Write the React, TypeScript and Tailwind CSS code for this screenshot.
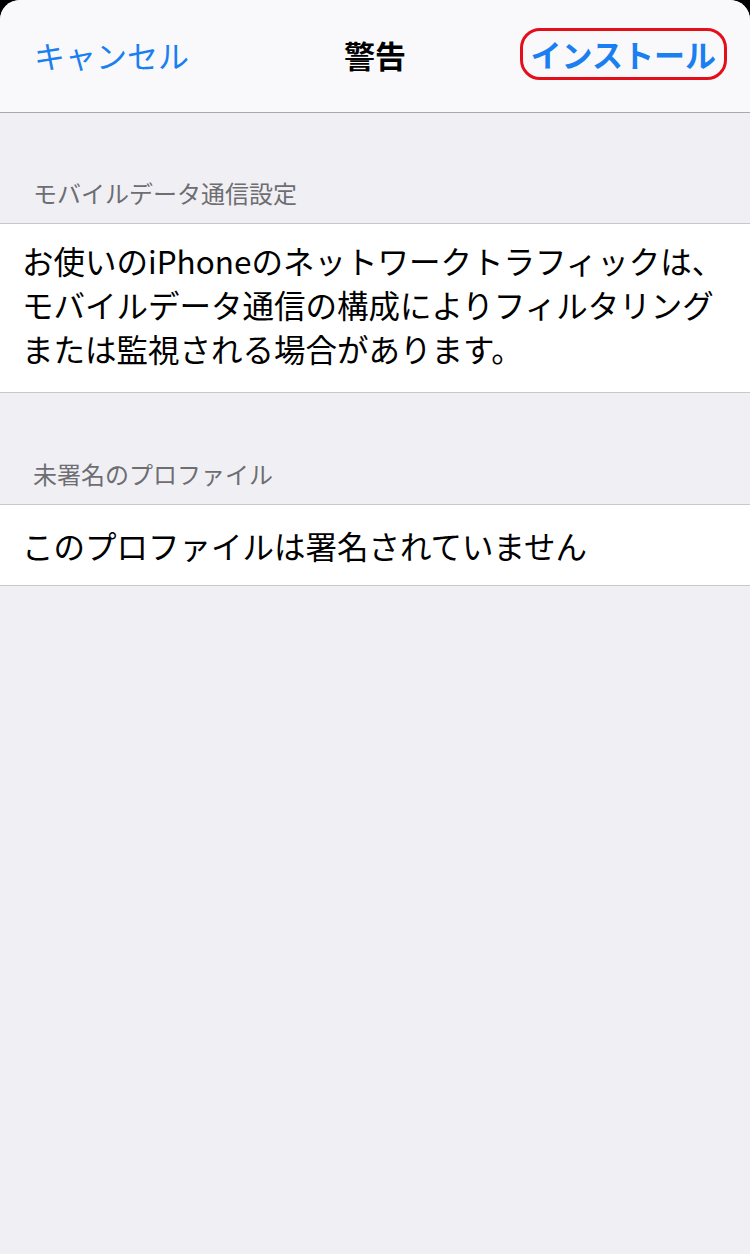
const font = { fontFamily: '"Noto Sans CJK JP", "Noto Sans", sans-serif' };

function SectionHeader({ title, tall }: { title: string; tall?: boolean }) {
  return (
    <div className={tall ? "flex h-[111px] items-end px-[33px] pb-[16px]" : "flex h-[110px] items-end px-[33px] pb-[16px]"}>
      <span className="text-[24px] leading-[28px] text-[#6d6d72]">{title}</span>
    </div>
  );
}

export default function App() {
  return (
    <div className="min-h-screen bg-black" style={font}>
      <div className="flex min-h-[1254px] flex-col overflow-hidden rounded-t-[20px] bg-[#f0f0f4]">
        <header className="grid h-[113px] grid-cols-[1fr_auto_1fr] items-center border-b border-[#a9a9ad] bg-[#f9f9fb] px-[23px] pb-[4px]">
          <button className="ml-[11px] justify-self-start text-[31px] leading-none text-[#1a7ff0]">キャンセル</button>
          <h1 className="text-[31px] font-bold leading-none text-black">警告</h1>
          <button className="justify-self-end rounded-[20px] border-[3px] border-[#e3101c] px-[8px] py-[7px] text-[31px] font-bold leading-[32px] text-[#1a7ff0]">
            インストール
          </button>
        </header>

        <SectionHeader title="モバイルデータ通信設定" />
        <div className="border-y border-[#c8c7cc] bg-white pl-[22px] pr-[10px] pt-[14px] pb-[22px]">
          <p className="whitespace-nowrap text-[31.5px] leading-[44px] text-black">
            お使いのiPhoneのネットワークトラフィックは、
            <br />
            モバイルデータ通信の構成によりフィルタリング
            <br />
            または監視される場合があります。
          </p>
        </div>

        <SectionHeader title="未署名のプロファイル" tall />
        <div className="border-y border-[#c8c7cc] bg-white pl-[22px] pt-[18px] pb-[18px]">
          <p className="text-[31.5px] leading-[44px] text-black">このプロファイルは署名されていません</p>
        </div>
      </div>
    </div>
  );
}
